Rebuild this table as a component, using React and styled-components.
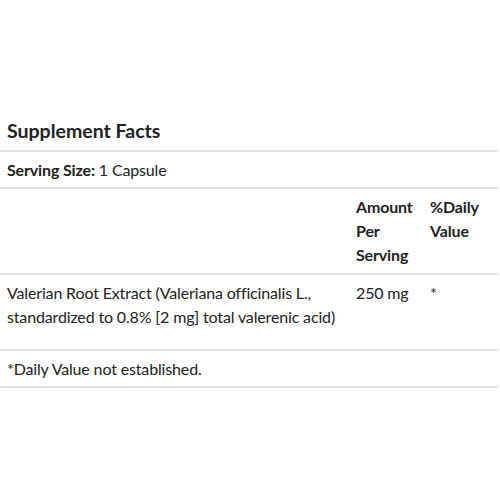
import React from 'react';
import styled, {createGlobalStyle} from 'styled-components';

const GlobalStyle = createGlobalStyle`
  body {
    margin: 0;
    background: #fff;
    font-family: Lato, "Liberation Sans", sans-serif;
    color: #222;
  }
`

const Wrapper = styled.div`
  width: 498px;
  padding-top: 118px;
`

const Title = styled.h2`
  margin: 0;
  padding: 0 7px 6px;
  font-size: 19.5px;
  line-height: 26px;
  font-weight: 700;
  border-bottom: 2px solid #e0e0e0;
`

const Row = styled.div`
  display: grid;
  grid-template-columns: 349px 74px 1fr;
  border-bottom: 2px solid #e0e0e0;
  padding-bottom: ${props => props.extra || 0}px;
`

const Cell = styled.div`
  padding: 6px 3px 5px 7px;
  font-size: 16px;
  line-height: 24px;
  letter-spacing: -0.15px;
  font-weight: ${props => props.bold ? 700 : 400};
  grid-column: ${props => props.span ? '1 / -1' : 'auto'};
`

const facts = [
  {
    name: 'Valerian Root Extract (Valeriana officinalis L., standardized to 0.8% [2 mg] total valerenic acid)',
    amount: '250 mg',
    dv: '*'
  }
]

const App = () => {
  return (
    <Wrapper>
      <GlobalStyle />
      <Title>Supplement Facts</Title>
      <Row>
        <Cell span><b>Serving Size:</b> 1 Capsule</Cell>
      </Row>
      <Row extra={1}>
        <Cell></Cell>
        <Cell bold>Amount Per Serving</Cell>
        <Cell bold>%Daily Value</Cell>
      </Row>
      {facts.map(item => (
        <Row key={item.name} extra={15}>
          <Cell>{item.name}</Cell>
          <Cell>{item.amount}</Cell>
          <Cell>{item.dv}</Cell>
        </Row>
      ))}
      <Row>
        <Cell span>*Daily Value not established.</Cell>
      </Row>
    </Wrapper>
  )
}

export default App;
